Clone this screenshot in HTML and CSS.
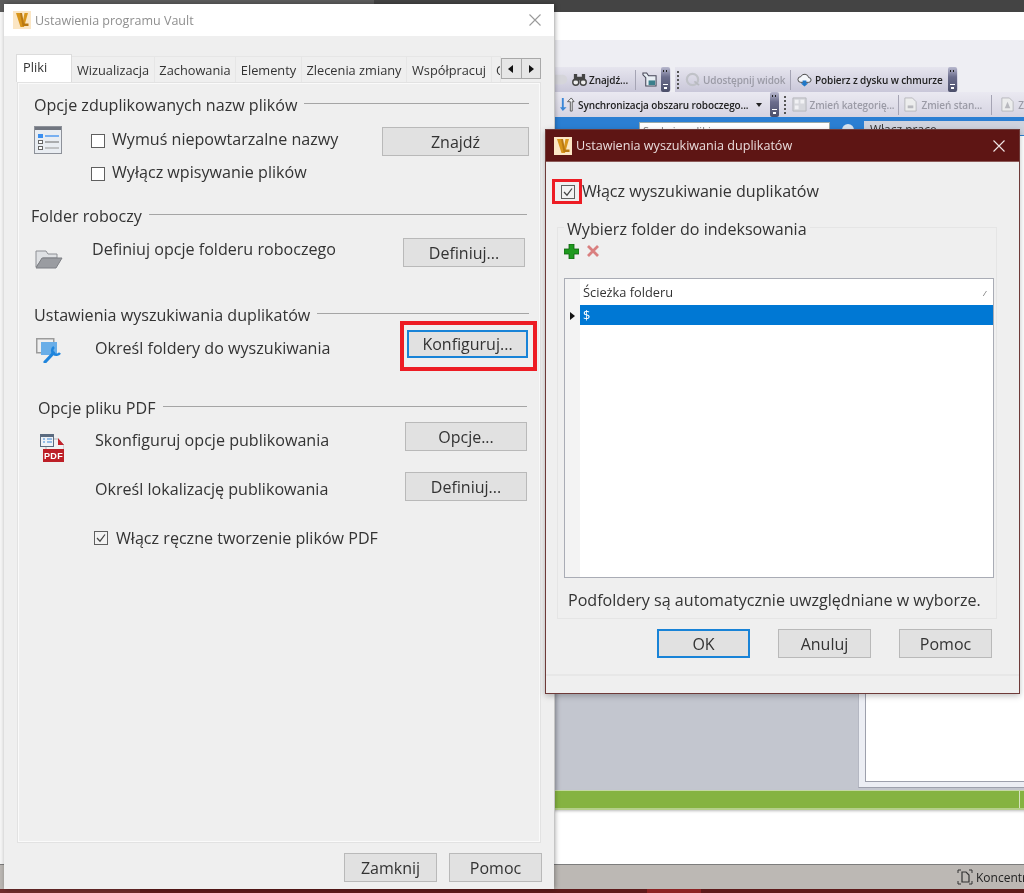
FILE: index.html
```html
<!DOCTYPE html>
<html lang="pl">
<head>
<meta charset="utf-8">
<title>Ustawienia programu Vault</title>
<link rel="stylesheet" href="styles.css">
</head>
<body>
<svg class="defs" width="0" height="0" aria-hidden="true">
  <symbol id="vault" viewBox="0 0 18 18">
    <rect width="18" height="18" fill="#fbe6c4"/>
    <path d="M3 2h4.500l2.200 9.500L11.500 2H15l-4 14H7.500z" fill="#d8951c"/>
    <path d="M7 2h2l2 10.500h4.500V15H9.500z" fill="#b97812"/>
  </symbol>
</svg>
<main class="desktop">
  <section class="app">
    <div class="app-title"><span class="app-title-dark"></span></div>
    <div class="app-body">
      <div class="app-blank"></div>
      <div class="app-menu"></div>
      <div class="tb-row tb-row-1">
        <div class="tb tb-a">
          <svg class="ti" viewBox="0 0 16 16"><path d="M0 3h8a4 4 0 0 1 0 10H0z" fill="#d5d5da"/></svg>
          <svg class="ti" viewBox="0 0 16 16"><circle cx="4" cy="11" r="3.200" fill="#eee" stroke="#444" stroke-width="1.500"/><circle cx="12" cy="11" r="3.200" fill="#eee" stroke="#444" stroke-width="1.500"/><path d="M2 2h3.500v7H2zM10.500 2H14v7h-3.500zM5.500 5h5v4h-5z" fill="#444"/></svg>
          <span class="tl tl-znajdz">Znajdź...</span><i class="sep"></i>
          <svg class="ti" viewBox="0 0 16 16"><path d="M1 1h4l2 3h8v11H4V6L1 3z" fill="#e8eef4" stroke="#445" stroke-width="1.100"/><path d="M7 9h7v5H7z" fill="#3a7f8c"/></svg>
          <span class="grip"></span>
        </div>
        <div class="tb tb-b">
          <span class="dots"></span>
          <svg class="ti" viewBox="0 0 16 16"><circle cx="8" cy="8" r="6" fill="none" stroke="#c0c2c8" stroke-width="2.400"/><path d="M10 10l5 4" stroke="#b8bac0" stroke-width="2"/></svg>
          <span class="tl tl-off tl-share">Udostępnij widok</span><i class="sep"></i>
          <svg class="ti" viewBox="0 0 16 16"><path d="M4 11a3 3 0 0 1 0-6 4.500 4.500 0 0 1 8.500 1A2.500 2.500 0 0 1 12.500 11z" fill="#f4f6fa" stroke="#444" stroke-width="1"/><path d="M6 9h4v3h2l-4 3.500L4 12h2z" fill="#1f78c8"/></svg>
          <span class="tl tl-cloud">Pobierz z dysku w chmurze</span>
          <span class="grip"></span>
        </div>
      </div>
      <div class="tb-row tb-row-2">
        <svg class="ti" viewBox="0 0 16 16"><path d="M4 1v10h3l-4 4-3-4h2V1z" fill="#3b86d6"/><path d="M11 15V5H8l4-4 3 4h-2v10z" fill="#f2f4f8" stroke="#555" stroke-width="1"/></svg>
        <span class="tl tl-sync">Synchronizacja obszaru roboczego...</span>
        <span class="caret"></span>
        <span class="grip"></span>
        <span class="dots"></span>
        <svg class="ti" viewBox="0 0 16 16"><path d="M1 1h14v14H1z" fill="#d6d7dc" stroke="#b4b5bb"/><path d="M3 3h4v4H3zM9 3h4v4H9zM3 9h4v4H3z" fill="#f1f1f4"/></svg>
        <span class="tl tl-off tl-kat">Zmień kategorię...</span><i class="sep"></i>
        <svg class="ti" viewBox="0 0 16 16"><path d="M2 1h8l4 4v10H2z" fill="#eceded" stroke="#b6b7bc"/><path d="M5 9h6v3H5z" fill="#b8b9be"/></svg>
        <span class="tl tl-off tl-stan">Zmień stan...</span><i class="sep"></i>
        <svg class="ti ti-last" viewBox="0 0 16 16"><path d="M2 1h8l4 4v10H2z" fill="#eceded" stroke="#b6b7bc"/><path d="M8 5l3 7H5z" fill="#b8b9be"/></svg>
        <span class="tl tl-off">Z</span>
      </div>
      <div class="blue">
        <div class="search"><span>Szukaj w pliki</span></div>
        <span class="help"></span>
        <div class="peek"><span>Włącz pracę</span></div>
      </div>
      <div class="work">
        <div class="work-left"></div>
        <div class="work-right"><div class="work-inner"></div></div>
      </div>
      <div class="green"><i class="green-div"></i></div>
      <div class="log"></div>
    </div>
    <div class="status">
      <svg class="status-icon" viewBox="0 0 16 16"><path d="M1 4V1h3M12 1h3v3M15 12v3h-3M4 15H1v-3" fill="none" stroke="#333"/><path d="M5 3h4l3 3v7H5z" fill="none" stroke="#333" stroke-width="1.200"/></svg>
      <span>Koncentracja</span>
    </div>
    <div class="taskbar"><i class="task-a"></i><i class="task-b"></i></div>
  </section>

  <section class="dlg dlg-main">
    <header class="dlg-title">
      <svg class="v-icon"><use href="#vault"/></svg>
      <span>Ustawienia programu Vault</span>
      <svg class="close" viewBox="0 0 12 12"><path d="M.5.500l11 11M11.500.500l-11 11" stroke="#9a9a9a" stroke-width="1.100"/></svg>
    </header>
    <nav class="tabs">
      <span class="tab tab-on">Pliki</span>
      <span class="tab t2">Wizualizacja</span>
      <span class="tab t3">Zachowania</span>
      <span class="tab t4">Elementy</span>
      <span class="tab t5">Zlecenia zmiany</span>
      <span class="tab t6">Współpracuj</span>
      <span class="tab t7">Opcje</span>
      <span class="scroller">
        <span class="sc"><svg viewBox="0 0 6 8"><path d="M5 0v8L0 4z" fill="#111"/></svg></span>
        <span class="sc"><svg viewBox="0 0 6 8"><path d="M1 0v8l5-4z" fill="#111"/></svg></span>
      </span>
    </nav>
    <div class="panel">
      <section class="sec s1">
        <h2 class="head"><span>Opcje zduplikowanych nazw plików</span><i></i></h2>
        <div class="body b1">
          <svg class="ic ic-list" viewBox="0 0 28 28"><rect x=".5" y=".5" width="27" height="27" fill="#e9edf2" stroke="#8d9199"/><path d="M1 1h26v3H1z" fill="#70757f"/><rect x="4" y="8" width="5" height="4" fill="#3b8ff0"/><path d="M11 10h14" stroke="#3b8ff0" stroke-width="1.300"/><rect x="4.500" y="14.500" width="4" height="3" fill="#fff" stroke="#666"/><path d="M11 16h14" stroke="#888" stroke-width="1.300"/><rect x="4.500" y="20.500" width="4" height="3" fill="#fff" stroke="#666"/><path d="M11 22h14" stroke="#aaa" stroke-width="1.300"/></svg>
          <div class="checks">
            <label class="check"><span class="box"></span><span>Wymuś niepowtarzalne nazwy</span></label>
            <label class="check"><span class="box"></span><span>Wyłącz wpisywanie plików</span></label>
          </div>
          <button class="btn btn-find">Znajdź</button>
        </div>
      </section>
      <section class="sec s2">
        <h2 class="head"><span>Folder roboczy</span><i></i></h2>
        <div class="body b2">
          <svg class="ic ic-folder" viewBox="0 0 28 20"><path d="M1 18V2h10l2 3h9v4H8z" fill="#dfe1e4" stroke="#8d8f94"/><path d="M1 19l6-10h20l-6 10z" fill="#9a9ca1" stroke="#7d7f84"/></svg>
          <span class="txt">Definiuj opcje folderu roboczego</span>
          <button class="btn btn-def">Definiuj...</button>
        </div>
      </section>
      <section class="sec s3">
        <h2 class="head"><span>Ustawienia wyszukiwania duplikatów</span><i></i></h2>
        <div class="body b3">
          <svg class="ic ic-conf" viewBox="0 0 25 25"><rect x=".75" y=".75" width="17" height="14" fill="none" stroke="#9b9b9b" stroke-width="1.500"/><rect x="5" y="4" width="16" height="13" fill="#69aee8"/><path d="M9 24l8.500-9" fill="none" stroke="#1f85dc" stroke-width="3.200" stroke-linecap="round"/><path d="M18 9A4.300 4.300 0 1 0 24 15" fill="none" stroke="#1f85dc" stroke-width="2.600"/></svg>
          <span class="txt">Określ foldery do wyszukiwania</span>
          <div class="focus-wrap">
            <button class="btn btn-conf btn-focus">Konfiguruj...</button>
            <span class="annot annot-conf"></span>
          </div>
        </div>
      </section>
      <section class="sec s4">
        <h2 class="head"><span>Opcje pliku PDF</span><i></i></h2>
        <div class="body b4">
          <svg class="ic ic-pdf" viewBox="0 0 24 28"><path d="M6 5h12l6 6v16H6z" fill="#f1f1f3" stroke="#b5b5b8"/><path d="M18 4l6 7h-6z" fill="#c3232b"/><rect x=".5" y=".5" width="13" height="12" fill="#eef2f7" stroke="#5b6b80"/><path d="M1 1h12v2H1z" fill="#5b6b80"/><path d="M3 5h2M7 5h5M3 8h2M7 8h5" stroke="#3a88d8" stroke-width="1.200"/><rect x="3" y="15" width="21" height="13" fill="#bd1f27"/><text x="13.500" y="25" text-anchor="middle" class="pdf-t">PDF</text></svg>
          <div class="pdf-rows">
            <div class="pdf-row pr1"><span class="txt">Skonfiguruj opcje publikowania</span><button class="btn btn-opt">Opcje...</button></div>
            <div class="pdf-row pr2"><span class="txt">Określ lokalizację publikowania</span><button class="btn btn-opt">Definiuj...</button></div>
            <label class="check check-pdf"><span class="box box-on"><svg viewBox="0 0 12 12"><path d="M2 6l3 3.200L10 2.500" fill="none" stroke="#444" stroke-width="1.200"/></svg></span><span>Włącz ręczne tworzenie plików PDF</span></label>
          </div>
        </div>
      </section>
    </div>
    <footer class="dlg-foot">
      <button class="btn btn-foot">Zamknij</button>
      <button class="btn btn-foot">Pomoc</button>
    </footer>
  </section>

  <section class="dlg dlg-dup">
    <header class="dup-title">
      <svg class="v-icon"><use href="#vault"/></svg>
      <span>Ustawienia wyszukiwania duplikatów</span>
      <svg class="close" viewBox="0 0 12 12"><path d="M.5.500l11 11M11.500.500l-11 11" stroke="#f0e6e6" stroke-width="1.100"/></svg>
    </header>
    <div class="dup-body">
      <label class="dup-check">
        <span class="box box-on box-dup"><svg viewBox="0 0 12 12"><path d="M2 6l3 3.200L10 2.500" fill="none" stroke="#444" stroke-width="1.200"/></svg></span>
        <span>Włącz wyszukiwanie duplikatów</span>
        <span class="annot annot-dup"></span>
      </label>
      <fieldset class="group">
        <legend>Wybierz folder do indeksowania</legend>
        <div class="mini">
          <svg class="m-add" viewBox="0 0 15 15"><path d="M5 0h5v5h5v5h-5v5H5v-5H0V5h5z" fill="#1f9a1f" stroke="#0f5f0f" stroke-width=".8"/></svg>
          <svg class="m-del" viewBox="0 0 14 14"><path d="M2 2l10 10M12 2L2 12" stroke="#d97f7f" stroke-width="2.800"/></svg>
        </div>
        <div class="table">
          <div class="t-gutter"><svg class="t-arrow" viewBox="0 0 6 8"><path d="M0 0v8l5-4z" fill="#111"/></svg></div>
          <div class="t-main">
            <div class="t-head"><span>Ścieżka folderu</span><span class="t-sort">/</span></div>
            <div class="t-sel">$</div>
          </div>
        </div>
        <p class="note">Podfoldery są automatycznie uwzględniane w wyborze.</p>
      </fieldset>
      <div class="dup-actions">
        <button class="btn btn-foot btn-focus">OK</button>
        <button class="btn btn-foot">Anuluj</button>
        <button class="btn btn-foot">Pomoc</button>
      </div>
    </div>
    <div class="dup-strip"></div>
  </section>
</main>
</body>
</html>
```
FILE: styles.css
```css
* { box-sizing: border-box; }
html, body { margin: 0; padding: 0; }
body { font-family: "Open Sans", "Noto Sans", "Liberation Sans", sans-serif; color: #2d2d2d; background: #fff; }
.defs { position: absolute; }
.desktop { position: relative; width: 1024px; height: 893px; overflow: hidden; filter: blur(.35px); }

/* background application */
.app { position: absolute; inset: 0; display: flex; flex-direction: column; background: #f7f7f7; }
.app-title { height: 12px; background: #5d5d5d; flex: none; display: flex; justify-content: flex-end; }
.app-title-dark { width: 650px; height: 12px; background: #444; }
.app-body { flex: 1; margin-left: 555px; display: flex; flex-direction: column; background: #fff; min-height: 0; }
.app-blank { height: 28px; background: #fff; flex: none; }
.app-menu { height: 25px; background: #eeeef3; flex: none; }
.tb-row { display: flex; flex: none; font-size: 10px; color: #222; white-space: nowrap; }
.tb-row-1 { height: 27px; background: #eeeef3; gap: 4px; align-items: flex-end; }
.tb-row-2 { height: 25px; padding-left: 5px; align-items: center; background: linear-gradient(#eae9f1, #d6d4e2); overflow: hidden; }
.tb { display: flex; align-items: center; height: 25px; background: linear-gradient(#e6e5ee, #c9c7d9); border-radius: 0 4px 4px 0; }
.tb-a { width: 116px; }
.tb-b { width: 283px; padding-left: 1px; }
.ti { width: 15px; height: 15px; flex: none; }
.tl { margin-left: 3px; font-weight: 600; font-size: 10px; letter-spacing: -.1px; }
.tl-off { color: #9b9ba6; }
.tl-znajdz { width: 42px; margin-left: 2px; }
.tl-share { width: 83px; }
.tl-cloud { width: 130px; }
.tl-sync { width: 172px; }
.tl-kat { width: 86px; }
.tl-stan { width: 72px; }
.tb-a .ti:first-child { margin-right: 2px; }
.tb-a .ti:nth-child(5), .tb-b .ti { margin-left: 2px; }
.ti-last { margin-left: 4px; }
.sep { width: 1px; height: 20px; background: #a5a4b4; margin: 0 4px 0 4px; flex: none; }
.grip { position: relative; width: 9px; height: 25px; flex: none; background: linear-gradient(#b9b9cf, #6b6d8c 40%, #4c4f6a); border-radius: 2px; }
.grip::before { content: ""; position: absolute; left: 2px; top: 3px; width: 5px; height: 2px; background: repeating-linear-gradient(90deg, #222 0 1px, transparent 1px 3px); }
.grip::after { content: ""; position: absolute; left: 2px; bottom: 3px; width: 5px; height: 4px; border-top: 1px solid #fff; background: linear-gradient(#fff, #fff) center bottom / 3px 2px no-repeat; }
.tb .grip { margin-left: auto; margin-right: 1px; }
.dots { width: 2px; height: 18px; margin: 0 4px 0 1px; flex: none; border-left: 2px dotted #555; }
.tb-row-2 .dots { margin-right: 6px; }
.caret { width: 0; height: 0; margin: 0 8px 0 7px; border: 3px solid transparent; border-top: 4px solid #222; border-bottom: 0; flex: none; }
.tb-row-2 .grip { margin: 0 4px 0 0; }
.blue { height: 19px; background: #2b7fd3; display: flex; align-items: flex-start; flex: none; padding: 5px 0 0 84px; overflow: hidden; }
.search { width: 191px; height: 14px; background: #fff; border: 1px solid #9aa; font-size: 11px; padding-left: 3px; line-height: 16px; color: #777; overflow: hidden; }
.help { width: 12px; height: 12px; border-radius: 50%; background: #d9e4ef; margin: 2px 10px 0 12px; flex: none; }
.peek { flex: 1; height: 14px; background: #cfd3de; font-size: 12px; padding-left: 6px; line-height: 18px; overflow: hidden; color: #333; margin-top: -1px; }
.work { flex: 1; display: flex; min-height: 0; background: #c3c6cf; }
.work-left { flex: 1; box-shadow: inset 6px 0 4px -4px #a9acb6; }
.work-right { width: 166px; margin-bottom: 2px; padding: 0 0 5px 6px; background: #eceef4; border-bottom: 1px solid #9da0ac; border-left: 1px solid #b4b7c2; }
.work-inner { height: 100%; background: #fff; border-left: 1px solid #9da0ac; border-bottom: 1px solid #9da0ac; }
.green { height: 20px; background: #85b341; border-top: 1px solid #c4d8a4; border-bottom: 2px solid #b5cf8c; flex: none; display: flex; justify-content: flex-end; padding-right: 4px; }
.green-div { width: 1px; background: #d5e2bf; }
.log { height: 54px; background: #fff; flex: none; box-shadow: inset 0 3px 3px -2px #bbb; }
.status { height: 25px; flex: none; background: #bcb8b4; border-top: 1px solid #7d7d7d; display: flex; align-items: center; justify-content: flex-start; font-size: 12px; color: #222; overflow: hidden; padding-left: 957px; white-space: nowrap; }
.status-icon { width: 16px; height: 16px; flex: none; margin-right: 3px; }
.status span { flex: none; }
.taskbar { height: 4px; flex: none; background: #5e1a1a; display: flex; }
.task-a { width: 140px; background: #6f2c2c; }
.task-b { width: 54px; margin-left: 507px; background: #8d2323; }

/* dialogs */
.dlg { position: absolute; background: #efefef; display: flex; flex-direction: column; }
.dlg-main { left: 4px; top: 4px; width: 550px; height: 885px; box-shadow: 1px 0 5px rgba(0,0,0,.35); }
.dlg-dup { left: 545px; top: 129px; width: 475px; height: 565px; border: 1px solid #6e3a38; box-shadow: 0 2px 6px rgba(0,0,0,.25); }
.dlg-title { height: 32px; flex: none; background: #fff; display: flex; align-items: center; padding: 0 13px 0 9px; font-size: 12.5px; color: #8f8f8f; }
.v-icon { width: 18px; height: 18px; flex: none; margin-right: 4px; }
.close { width: 12px; height: 12px; margin-left: auto; flex: none; }

.tabs { display: flex; align-items: flex-end; height: 46px; flex: none; margin-left: 12px; position: relative; z-index: 1; font-size: 12.8px; color: #333; }
.tab { height: 26px; line-height: 26px; text-align: center; border: 1px solid #e6e6e6; border-bottom: 0; border-left: 0; white-space: nowrap; overflow: hidden; flex: none; background: #efefef; }
.tab-on { width: 56px; height: 28px; line-height: 24px; background: #fff; border-color: #dcdcdc; border-left: 1px solid #dcdcdc; text-align: left; padding-left: 6px; }
.t2 { width: 83px; }
.t3 { width: 81px; }
.t4 { width: 66px; }
.t5 { width: 105px; }
.t6 { width: 85px; }
.t7 { width: 9px; text-align: left; padding-left: 4px; }
.scroller { display: flex; height: 21px; margin-bottom: 3px; border: 1px solid #a9a9a9; background: #e6e6e6; flex: none; width: 40px; }
.sc { flex: 1; display: flex; align-items: center; justify-content: center; }
.sc + .sc { border-left: 1px solid #a9a9a9; }
.sc svg { width: 6px; height: 8px; }

.panel { width: 524px; height: 761px; margin-left: 13px; flex: none; border: 1px solid #e2e2e2; box-shadow: inset 0 0 0 1px #fafafa; padding-top: 10px; }
.sec { font-size: 16.1px; }
.head { display: flex; align-items: center; height: 24px; margin: 0; font-size: 16.1px; font-weight: 400; color: #333; white-space: nowrap; }
.head i { flex: 1; height: 1px; background: #a5a5a5; margin: -4px 0 0 7px; }
.s1 { height: 111px; margin-left: 16px; margin-right: 11px; }
.s2 { height: 99px; margin-left: 13px; margin-right: 13px; }
.s3 { height: 93px; margin-left: 16px; margin-right: 11px; }
.s4 { margin-left: 20px; margin-right: 13px; }
.body { display: flex; align-items: flex-start; }
.txt { white-space: nowrap; line-height: 22px; color: #333; }
.ic { flex: none; display: block; }
.b1 { padding-top: 10px; }
.ic-list { width: 28px; height: 28px; margin-top: -1px; }
.checks { margin-left: 29px; display: flex; flex-direction: column; gap: 9px; }
.check { display: flex; align-items: center; gap: 7px; height: 24px; white-space: nowrap; color: #333; }
.box { width: 14px; height: 14px; flex: none; background: #fff; border: 1px solid #5f5f5f; display: block; margin-top: 3px; }
.box svg { display: block; width: 12px; height: 12px; }
.box-on { background: #f2f2f2; }
.btn { display: block; flex: none; height: 29px; padding: 0; border: 1px solid #b9b9b9; background: #e1e1e1; font: inherit; font-size: 16px; color: #333; text-align: center; }
.btn-focus { border: 2px solid #1883d7; }
.btn-find { width: 147px; margin-left: auto; }
.b2 { padding-top: 10px; margin-left: 3px; }
.ic-folder { width: 28px; height: 20px; margin-top: 11px; margin-left: 1px; }
.b2 .txt { margin: 0 0 0 29px; }
.btn-def { width: 122px; margin-left: auto; margin-right: 2px; }
.b3 { padding-top: 3px; }
.ic-conf { width: 25px; height: 25px; margin: 8px 0 0 2px; }
.b3 .txt { margin: 7px 0 0 34px; }
.focus-wrap { position: relative; margin-left: auto; margin-right: 1px; }
.btn-conf { width: 121px; height: 28px; }
.annot { position: absolute; border: 4px solid #ed1c24; pointer-events: none; }
.annot-conf { left: -7px; top: -9px; width: 137px; height: 50px; }
.b4 { padding-top: 2px; }
.ic-pdf { width: 24px; height: 28px; margin: 12px 0 0 2px; }
.pdf-t { font: 700 9px "Liberation Sans", sans-serif; fill: #fff; letter-spacing: .4px; }
.pdf-rows { flex: 1; margin-left: 31px; }
.pdf-row { display: flex; justify-content: space-between; }
.pr1 { height: 50px; }
.pr2 { height: 50px; }
.pr1 .txt { margin-top: 7px; }
.pr2 .txt { margin-top: 6px; }
.btn-opt { width: 122px; }
.check-pdf { gap: 8px; margin: 4px 0 0 -1px; }
.check-pdf .box { margin-top: 0; }
.dlg-foot { flex: 1; display: flex; justify-content: flex-end; gap: 12px; padding: 10px 12px 0 0; font-size: 16px; }
.btn-foot { width: 93px; }

.dup-title { height: 32px; flex: none; background: #5e1514; display: flex; align-items: center; padding: 0 14px 0 8px; font-size: 12.6px; color: #eadcdc; border-bottom: 1px solid #8c5a58; }
.dup-body { flex: 1; font-size: 16px; padding: 0 0 0 11px; min-height: 0; }
.dup-check { position: relative; display: flex; align-items: center; height: 26px; margin-top: 16px; font-size: 16.1px; white-space: nowrap; color: #333; }
.box-dup { margin: 2px 7px 0 4px; }
.annot-dup { left: -5px; top: 1px; width: 30px; height: 25px; border-width: 3px; }
.group { margin: 13px 0 0 0; width: 440px; height: 402px; padding: 0 2px 0 6px; border: 1px solid #e5e5e5; }
.group legend { padding: 4px 3px 0 3px; margin-left: 0; font-size: 16.1px; line-height: 16px; color: #333; }
.mini { display: flex; align-items: center; gap: 7px; height: 16px; margin-top: 6px; }
.m-add { width: 15px; height: 15px; flex: none; }
.m-del { width: 14px; height: 14px; flex: none; }
.table { display: flex; height: 300px; width: 430px; margin-top: 19px; border: 1px solid #a9acb5; background: #fff; }
.t-gutter { width: 15px; flex: none; background: #f3f3f3; padding-top: 33px; padding-left: 5px; }
.t-arrow { display: block; width: 6px; height: 8px; }
.t-main { flex: 1; }
.t-head { height: 26px; display: flex; justify-content: space-between; align-items: center; padding: 0 6px 0 3px; font-size: 12.8px; color: #333; background: #fff; }
.t-sort { font-size: 8px; font-style: italic; color: #666; padding-right: 1px; }
.t-sel { height: 20px; background: #0078d4; color: #fff; font-size: 12.8px; line-height: 20px; padding-left: 3px; }
.note { margin: 12px 0 0 4px; font-size: 16.1px; line-height: 20px; white-space: nowrap; color: #333; }
.dup-actions { display: flex; gap: 28px; margin: 10px 0 0 100px; font-size: 16px; }
.dup-strip { height: 19px; flex: none; border-top: 2px solid #e7e7e7; margin: 0; }
```
